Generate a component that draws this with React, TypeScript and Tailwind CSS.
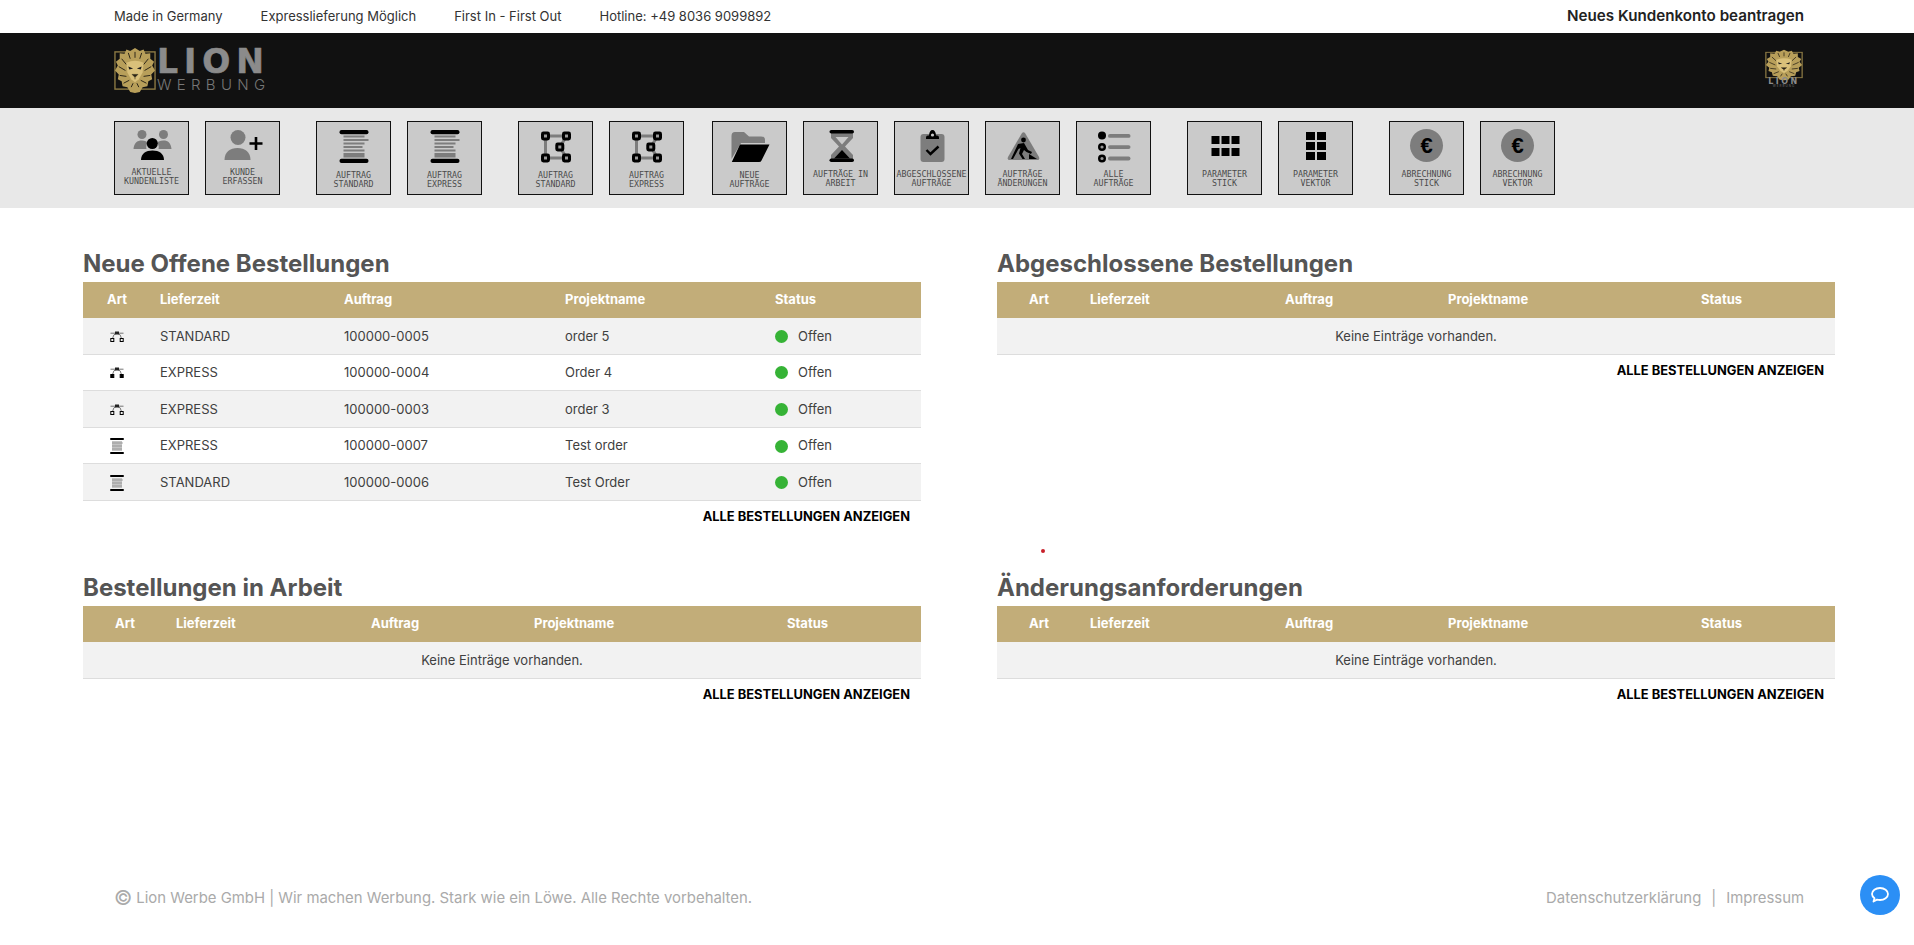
import { ReactNode } from "react";

const Svg = ({ children }: { children: ReactNode }) => (
  <svg viewBox="0 0 40 36" className="w-[40px] h-[36px]">
    {children}
  </svg>
);

const GRAY = "#7d7d7d";
const SANS_HEAVY = "font-['DejaVu_Sans',sans-serif] font-bold";

const PeopleIcon = () => (
  <Svg>
    <circle cx="10" cy="5.5" r="4.5" fill={GRAY} />
    <circle cx="31.5" cy="5.5" r="4.5" fill={GRAY} />
    <path d="M1.5 20 C2 14 5 11.5 10 11.5 C13 11.5 15 12.5 16 14 C14 16 14 18 14.5 20 Z" fill={GRAY} />
    <path d="M39.5 20 C39 14 36 11.5 31.5 11.5 C28 11.5 26 12.5 25 14 C27 16 27 18 26.5 20 Z" fill={GRAY} />
    <circle cx="20.3" cy="14.5" r="5.5" fill="#000" />
    <path d="M9 31 C9 24.5 14 21.5 20.5 21.5 C27 21.5 32 24.5 32 31 Z" fill="#000" />
  </Svg>
);

const PersonPlusIcon = () => (
  <Svg>
    <circle cx="15" cy="8.5" r="7.5" fill={GRAY} />
    <path d="M1.5 31 C1.5 23 7 19 14.5 19 C22 19 27.5 23 27.5 31 Z" fill={GRAY} />
    <path d="M33 8 V21 M26.5 14.5 H39.5" stroke="#000" strokeWidth="2.6" />
  </Svg>
);

const SpoolIcon = () => (
  <Svg>
    <rect x="5.5" y="1" width="29" height="4.2" rx="2" fill="#000" />
    <rect x="5.5" y="29.8" width="29" height="4.2" rx="2" fill="#000" />
    <rect x="9.5" y="6.5" width="21" height="2" fill={GRAY} />
    <rect x="9.5" y="10" width="25" height="2" fill={GRAY} />
    <rect x="9.5" y="13.5" width="21" height="2" fill={GRAY} />
    <rect x="9.5" y="17" width="19" height="2" fill={GRAY} />
    <rect x="9.5" y="20.5" width="21" height="2" fill={GRAY} />
    <rect x="9.5" y="24" width="21" height="4.5" fill={GRAY} />
  </Svg>
);

const Node = ({ x, y }: { x: number; y: number }) => (
  <g>
    <rect x={x - 4.5} y={y - 4.5} width="9" height="9" rx="2.4" fill="#000" />
    <rect x={x - 1.5} y={y - 1.5} width="3" height="3" fill="#9a9a9a" />
  </g>
);

const VectorIcon = () => (
  <Svg>
    <path d="M9.5 7 H30.5 L24 18 L30.5 29 H9.5 Z" fill="none" stroke={GRAY} strokeWidth="3" />
    <Node x={9.5} y={7} />
    <Node x={30.5} y={7} />
    <Node x={23.8} y={18} />
    <Node x={9.5} y={29} />
    <Node x={30.5} y={29} />
  </Svg>
);

const FolderIcon = () => (
  <Svg>
    <path d="M1.5 7 Q1.5 3 5 3 H14 L19 7.5 H31 Q35 7.5 35 11 V14 H11 L1.5 30 Z" fill={GRAY} />
    <path d="M10 15.5 H39.5 L31.5 31.5 Q31 33 29 33 H1.8 Z" fill="#000" />
  </Svg>
);

const HourglassIcon = () => (
  <Svg>
    <path d="M10 4 H32 V9 L24 17.5 L32 26 V30 H10 V26 L18 17.5 L10 9 Z" fill={GRAY} />
    <path d="M14.5 8 H27.5 L21 15.5 Z" fill="#c9c9c9" />
    <path d="M13 29.5 L21 21 L29 29.5 Z" fill="#000" />
    <rect x="8.5" y="1" width="24.5" height="3.6" rx="1.8" fill="#000" />
    <rect x="8.5" y="29.5" width="24.5" height="3.6" rx="1.8" fill="#000" />
  </Svg>
);

const ClipboardIcon = () => (
  <Svg>
    <rect x="8.5" y="5" width="24" height="28" rx="3" fill={GRAY} />
    <path d="M14 10 V8.5 Q14 6.5 16 6.5 H17 Q17.5 1 20.5 1 Q23.5 1 24 6.5 H25 Q27 6.5 27 8.5 V10 Z" fill="#000" />
    <circle cx="20.5" cy="6" r="1.6" fill="#c9c9c9" />
    <path d="M14.5 21 L18.5 25 L26.5 17.5" fill="none" stroke="#000" strokeWidth="2.4" />
  </Svg>
);

const DiggingIcon = () => (
  <Svg>
    <path d="M19 4 Q20.5 2.5 22 4 L36 28 Q37 31 34.5 31 H6.5 Q4 31 5 28 Z" fill={GRAY} />
    <circle cx="20.5" cy="11" r="2.4" fill="#000" />
    <path d="M15 15 L21 14 L25 21 L29 23 L28 25 L23.5 23 L21 21 L19 25 L22 30 H19.5 L16 24.5 L17.5 19 L15.5 20 L10 30 H8 Z" fill="#000" />
    <path d="M26 25 L34 30 L26 30 Z" fill="#000" />
  </Svg>
);

const ListIcon = () => (
  <Svg>
    <circle cx="8" cy="6.5" r="4" fill="#000" />
    <circle cx="8" cy="18" r="2.8" fill="#9a9a9a" stroke="#000" strokeWidth="2.4" />
    <circle cx="8" cy="29.5" r="2.8" fill="#9a9a9a" stroke="#000" strokeWidth="2.4" />
    <rect x="14" y="5" width="22.5" height="3.8" rx="1.9" fill={GRAY} />
    <rect x="14" y="16.2" width="22.5" height="3.8" rx="1.9" fill={GRAY} />
    <rect x="14" y="27.6" width="22.5" height="3.8" rx="1.9" fill={GRAY} />
  </Svg>
);

const GridWideIcon = () => (
  <Svg>
    {[6.5, 16.5, 26.5].map((x) =>
      [7, 19].map((y) => <rect key={`${x}-${y}`} x={x} y={y} width="8" height="8" fill="#000" />)
    )}
  </Svg>
);

const GridTallIcon = () => (
  <Svg>
    {[10, 21].map((x) =>
      [3, 13, 23].map((y) => <rect key={`${x}-${y}`} x={x} y={y} width="9" height="8" fill="#000" />)
    )}
  </Svg>
);

const EuroIcon = () => (
  <div className="w-[33px] h-[33px] rounded-full bg-[#7d7d7d] flex items-center justify-center text-[22px] font-bold text-black font-['Liberation_Sans',sans-serif]">
    €
  </div>
);

const groups = [
  {
    className: "",
    tiles: [
      { icon: <PeopleIcon />, lines: ["AKTUELLE", "KUNDENLISTE"], mt: "mt-[2px]" },
      { icon: <PersonPlusIcon />, lines: ["KUNDE", "ERFASSEN"], mt: "mt-[2px]" },
    ],
  },
  {
    className: "ml-[36px]",
    tiles: [
      { icon: <SpoolIcon />, lines: ["AUFTRAG", "STANDARD"], mt: "mt-[5px]" },
      { icon: <SpoolIcon />, lines: ["AUFTRAG", "EXPRESS"], mt: "mt-[5px]" },
    ],
  },
  {
    className: "ml-[36px]",
    tiles: [
      { icon: <VectorIcon />, lines: ["AUFTRAG", "STANDARD"], mt: "mt-[5px]" },
      { icon: <VectorIcon />, lines: ["AUFTRAG", "EXPRESS"], mt: "mt-[5px]" },
    ],
  },
  {
    className: "ml-[28px]",
    tiles: [
      { icon: <FolderIcon />, lines: ["NEUE", "AUFTRÄGE"], mt: "mt-[5px]" },
      { icon: <HourglassIcon />, lines: ["AUFTRÄGE IN", "ARBEIT"], mt: "mt-[4px]" },
      { icon: <ClipboardIcon />, lines: ["ABGESCHLOSSENE", "AUFTRÄGE"], mt: "mt-[4px]" },
      { icon: <DiggingIcon />, lines: ["AUFTRÄGE", "ÄNDERUNGEN"], mt: "mt-[4px]" },
      { icon: <ListIcon />, lines: ["ALLE", "AUFTRÄGE"], mt: "mt-[4px]" },
    ],
  },
  {
    className: "ml-[36px]",
    tiles: [
      { icon: <GridWideIcon />, lines: ["PARAMETER", "STICK"], mt: "mt-[4px]" },
      { icon: <GridTallIcon />, lines: ["PARAMETER", "VEKTOR"], mt: "mt-[4px]" },
    ],
  },
  {
    className: "ml-[36px]",
    tiles: [
      { icon: <EuroIcon />, lines: ["ABRECHNUNG", "STICK"], mt: "mt-[4px]" },
      { icon: <EuroIcon />, lines: ["ABRECHNUNG", "VEKTOR"], mt: "mt-[4px]" },
    ],
  },
];

const LionHead = () => (
  <svg viewBox="0 0 44 48" preserveAspectRatio="none" className="w-full h-full">
    <rect x="1" y="5" width="42" height="38" fill="none" stroke="#8f7c45" strokeWidth="1.4" />
    <path
      d="M22 1 L27 4 L31 2.5 L33 7 L38 6.5 L38 12 L42 15 L40 19 L43 24 L39 28 L40 33 L36 35 L35 40 L30 41 L27 46 L22 47 L17 46 L14 41 L9 40 L8 35 L4 33 L5 28 L1 24 L4 19 L2 15 L6 12 L6 6.5 L11 7 L13 2.5 L17 4 Z"
      fill="#b89f5a"
    />
    <path
      d="M8 12 L13 18 M5 20 L12 24 M6 29 L13 30 M10 37 L16 34 M36 12 L31 18 M39 20 L32 24 M38 29 L31 30 M34 37 L28 34 M22 5 V11 M15 6 L17 12 M29 6 L27 12 M18 41 L20 37 M26 41 L24 37"
      stroke="#2a2417"
      strokeWidth="1"
    />
    <path d="M13 16 Q22 12 31 16 L30 26 L26 33 L22 36 L18 33 L14 26 Z" fill="#d9c07a" />
    <path d="M15 20 L20 22 L16 23 Z M29 20 L24 22 L28 23 Z" fill="#1a1a1a" />
    <path d="M19 28 H25 L22 31 Z M22 31 V33" fill="#2a2417" stroke="#2a2417" strokeWidth="0.6" />
  </svg>
);

const SmallVector = ({ filled }: { filled: boolean }) => (
  <svg viewBox="0 0 14 11" className="w-[14px] h-[11px]">
    <path d="M2.5 7.5 Q3 3 7 2 Q11 3 11.5 7.5 M0.5 2.2 H13.5" fill="none" stroke="#666" strokeWidth="0.9" />
    <rect x="5" y="0.5" width="4" height="3" fill="#222" />
    <rect x="0.8" y="7.5" width="3" height="3" fill={filled ? "#000" : "#f2f2f2"} stroke="#000" strokeWidth="1" />
    <rect x="10.2" y="7.5" width="3" height="3" fill={filled ? "#000" : "#f2f2f2"} stroke="#000" strokeWidth="1" />
  </svg>
);

const SmallSpool = () => (
  <svg viewBox="0 0 14 16" className="w-[14px] h-[16px]">
    <rect x="0" y="0" width="14" height="2" rx="1" fill="#000" />
    <rect x="0" y="14" width="14" height="2" rx="1" fill="#000" />
    <rect x="2" y="3" width="10" height="10" fill="#c4c4c4" />
    <path d="M2 5 H13 M2 8 H12 M2 11 H12" stroke="#888" strokeWidth="0.7" />
  </svg>
);

const openOrders = [
  { icon: <SmallVector filled={false} />, time: "STANDARD", order: "100000-0005", name: "order 5" },
  { icon: <SmallVector filled />, time: "EXPRESS", order: "100000-0004", name: "Order 4" },
  { icon: <SmallVector filled={false} />, time: "EXPRESS", order: "100000-0003", name: "order 3" },
  { icon: <SmallSpool />, time: "EXPRESS", order: "100000-0007", name: "Test order" },
  { icon: <SmallSpool />, time: "STANDARD", order: "100000-0006", name: "Test Order" },
];

const heads = ["Lieferzeit", "Auftrag", "Projektname", "Status"];

function OrderSection({
  title,
  cols,
  children,
}: {
  title: string;
  cols: string;
  children: ReactNode;
}) {
  return (
    <section>
      <h2 className="h-[36px] leading-[36px] text-[24px] font-bold text-[#555]">{title}</h2>
      <div className={`grid ${cols} h-[36px] items-center bg-[#c2ad79] text-[13px] font-bold text-white`}>
        <div className="text-center">Art</div>
        {heads.map((h) => (
          <div key={h} className="pl-[9px]">
            {h}
          </div>
        ))}
      </div>
      {children}
      <div className="h-[32px] pr-[11px] text-right text-[12.9px] leading-[32px] font-bold text-black">
        ALLE BESTELLUNGEN ANZEIGEN
      </div>
    </section>
  );
}

const EmptyRow = () => (
  <div className="h-[37px] pt-[1px] flex items-center justify-center bg-[#f2f2f2] border-b border-[#ddd] text-[13px] text-[#404040]">
    Keine Einträge vorhanden.
  </div>
);

const EMPTY_COLS = "grid-cols-[84px_195px_163px_253px_1fr]";

export default function App() {
  return (
    <div className="relative min-h-screen flex flex-col bg-white font-['Inter',sans-serif] overflow-hidden">
      {/* top bar */}
      <div className="h-[33px] pl-[114px] pr-[110px] flex items-center justify-between text-[13px] text-[#333]">
        <div className="flex gap-[38px]">
          <span>Made in Germany</span>
          <span>Expresslieferung Möglich</span>
          <span>First In - First Out</span>
          <span>Hotline: +49 8036 9099892</span>
        </div>
        <span className="text-[15.2px] font-semibold text-[#222]">Neues Kundenkonto beantragen</span>
      </div>

      {/* logo bar */}
      <div className="h-[75px] pl-[114px] pr-[108px] flex items-center justify-between bg-[#111]">
        <div className="flex items-center gap-[1px]">
          <div className="w-[42px] h-[47px]">
            <LionHead />
          </div>
          <div className="flex flex-col w-[112px]">
            <span
              className={`text-[33px] leading-[26px] tracking-[6px] text-[#8b8b8b] [-webkit-text-stroke:0.6px_#8b8b8b] ${SANS_HEAVY}`}
            >
              LION
            </span>
            <span className="mt-[2px] text-[15px] leading-[16px] font-light tracking-[5.3px] text-[#777]">WERBUNG</span>
          </div>
        </div>
        <div className="flex flex-col items-center w-[44px] -mt-[4px]">
          <div className="w-[38px] h-[32px]">
            <LionHead />
          </div>
          <span className={`-mt-[3px] text-[8px] leading-[7px] tracking-[2.5px] text-[#8b8b8b] ${SANS_HEAVY}`}>LION</span>
          <span className="text-[3px] leading-[3px] tracking-[1px] text-[#777]">WERBUNG</span>
        </div>
      </div>

      {/* tile band */}
      <div className="h-[100px] pl-[114px] pt-[13px] flex bg-[#e8e8e8]">
        {groups.map((g, i) => (
          <div key={i} className={`flex gap-4 ${g.className}`}>
            {g.tiles.map((t) => (
              <div
                key={t.lines.join() + i}
                className="w-[75px] h-[74px] pt-[7px] flex flex-col items-center border border-[#111] bg-[#cacaca]"
              >
                <div className="h-[37px] flex items-start justify-center">{t.icon}</div>
                <div
                  className={`${t.mt} text-center text-[8.3px] leading-[9px] whitespace-nowrap text-[#4a4a4a] font-['DejaVu_Sans_Mono',monospace]`}
                >
                  {t.lines.map((l) => (
                    <div key={l}>{l}</div>
                  ))}
                </div>
              </div>
            ))}
          </div>
        ))}
      </div>

      {/* tables */}
      <main className="pt-[38px] pl-[83px] pr-[79px] grid grid-cols-2 gap-x-[76px] gap-y-[37px]">
        <OrderSection title="Neue Offene Bestellungen" cols="grid-cols-[68px_184px_221px_210px_1fr]">
          {openOrders.map((o, i) => (
            <div
              key={o.order}
              className={`grid grid-cols-[68px_184px_221px_210px_1fr] h-[36.6px] pt-[1px] items-center border-b border-[#ddd] text-[13px] text-[#404040] ${
                i % 2 === 0 ? "bg-[#f2f2f2]" : "bg-white"
              }`}
            >
              <div className="flex justify-center">{o.icon}</div>
              <div className="pl-[9px]">{o.time}</div>
              <div className="pl-[9px]">{o.order}</div>
              <div className="pl-[9px]">{o.name}</div>
              <div className="pl-[9px] flex items-center gap-[10px]">
                <span className="w-[13px] h-[13px] shrink-0 rounded-full bg-[#36b336]" />
                Offen
              </div>
            </div>
          ))}
        </OrderSection>
        <OrderSection title="Abgeschlossene Bestellungen" cols={EMPTY_COLS}>
          <EmptyRow />
        </OrderSection>
        <OrderSection title="Bestellungen in Arbeit" cols={EMPTY_COLS}>
          <EmptyRow />
        </OrderSection>
        <OrderSection title="Änderungsanforderungen" cols={EMPTY_COLS}>
          <EmptyRow />
        </OrderSection>
      </main>

      {/* stray marker */}
      <span className="absolute left-[1041px] top-[549px] w-[4px] h-[4px] rounded-full bg-[#c8202a]" />

      {/* footer */}
      <footer className="mt-auto h-[94px] pl-[114px] pr-[110px] flex items-center justify-between text-[14.9px] text-[#aaa]">
        <div className="flex items-center">
          <span className="mr-[4px] text-[20px] leading-none">©</span>
          Lion Werbe GmbH | Wir machen Werbung. Stark wie ein Löwe. Alle Rechte vorbehalten.
        </div>
        <div className="flex gap-[10px]">
          <span>Datenschutzerklärung</span>
          <span>|</span>
          <span>Impressum</span>
        </div>
      </footer>

      {/* chat bubble */}
      <button className="absolute right-[14px] bottom-[30px] w-[40px] h-[40px] rounded-full bg-[#2b8ff5] flex items-center justify-center">
        <svg viewBox="0 0 18 18" className="w-[18px] h-[18px]">
          <path
            d="M9 2 C13.4 2 17 4.7 17 8 C17 11.3 13.4 14 9 14 C8 14 7 13.9 6 13.6 L2.5 15.5 L3.5 12.2 C2 11 1 9.6 1 8 C1 4.7 4.6 2 9 2 Z"
            fill="none"
            stroke="#fff"
            strokeWidth="1.8"
            strokeLinejoin="round"
          />
        </svg>
      </button>
    </div>
  );
}
